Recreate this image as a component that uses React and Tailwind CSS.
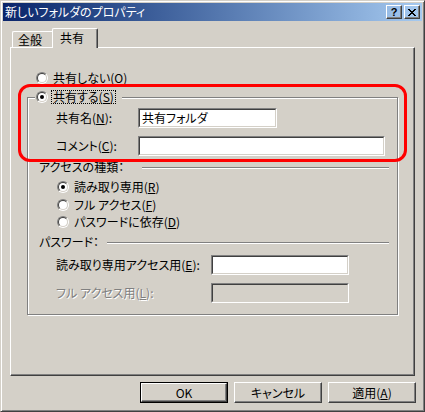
import React from 'react'

const raised =
  'border border-t-white border-l-white border-b-[#404040] border-r-[#404040] shadow-[inset_-1px_-1px_0_#808080]'

function Key({ children }) {
  return <span className="underline underline-offset-[1px]">{children}</span>
}

function Radio({ checked }) {
  return (
    <span className="flex h-[12px] w-[12px] shrink-0 rounded-full border border-t-[#808080] border-l-[#808080] border-b-white border-r-white">
      <span className="flex h-[10px] w-[10px] items-center justify-center rounded-full border border-t-[#404040] border-l-[#404040] border-b-[#d4d0c8] border-r-[#d4d0c8] bg-white">
        {checked && <span className="h-[4px] w-[4px] rounded-full bg-black" />}
      </span>
    </span>
  )
}

function Field({ className, value, disabled }) {
  return (
    <div
      className={`h-[20px] border border-t-[#808080] border-l-[#808080] border-b-white border-r-white ${className}`}
    >
      <div
        className={`flex h-full items-center border border-t-[#404040] border-l-[#404040] border-b-[#d4d0c8] border-r-[#d4d0c8] px-[2px] ${
          disabled ? 'bg-[#d4d0c8]' : 'bg-white'
        }`}
      >
        {value}
      </div>
    </div>
  )
}

function Button({ children, isDefault }) {
  if (isDefault) {
    return (
      <div className="h-[21px] w-[88px] border border-black">
        <div className={`flex h-full items-center justify-center ${raised}`}>{children}</div>
      </div>
    )
  }
  return <div className={`flex h-[21px] w-[88px] items-center justify-center ${raised}`}>{children}</div>
}

function Heading({ label, width }) {
  return (
    <div className="flex h-[13px] items-center pl-[11px] pr-[8px]">
      <span className={width}>{label}</span>
      <span className="mt-[3px] h-[2px] flex-1 border-t border-b border-t-[#808080] border-b-white" />
    </div>
  )
}

function Option({ checked, children, className }) {
  return (
    <div className={`flex h-[13px] items-center gap-[5px] pl-[29px] ${className}`}>
      <Radio checked={checked} />
      <span>{children}</span>
    </div>
  )
}

export default function App() {
  return (
    <div className="h-[412px] w-[425px] bg-[#d4d0c8] p-[2px] text-[12px] leading-none text-black font-['Noto_Sans_CJK_JP',sans-serif] [font-feature-settings:'palt'] border border-t-[#d4d0c8] border-l-[#d4d0c8] border-b-[#404040] border-r-[#404040] shadow-[inset_1px_1px_0_#fff,inset_-1px_-1px_0_#808080]">
      {/* title bar */}
      <div className="flex h-[18px] items-center justify-between bg-gradient-to-r from-[#0a246a] to-[#a6caf0] pl-[2px] pr-[2px]">
        <span className="text-white">新しいフォルダのプロパティ</span>
        <div className="flex gap-[2px]">
          <div className={`flex h-[14px] w-[16px] items-center justify-center ${raised}`}>
            <span className="font-['Liberation_Sans',sans-serif] text-[11px] font-bold leading-none">?</span>
          </div>
          <div className={`flex h-[14px] w-[16px] items-center justify-center ${raised}`}>
            <svg width="8" height="7" viewBox="0 0 8 7" shapeRendering="crispEdges">
              <path
                d="M0 0h2v1H0zM6 0h2v1H6zM1 1h2v1H1zM5 1h2v1H5zM2 2h4v1H2zM3 3h2v1H3zM2 4h4v1H2zM1 5h2v1H1zM5 5h2v1H5zM0 6h2v1H0zM6 6h2v1H6z"
                fill="#000"
              />
            </svg>
          </div>
        </div>
      </div>

      {/* tabs */}
      <div className="flex h-[26px] items-end pl-[9px]">
        <div className="flex h-[16px] w-[42px] items-center rounded-t-[2px] border-t border-l border-white pl-[5px]">
          全般
        </div>
        <div className="relative z-10 -mb-px -ml-[2px] flex h-[20px] w-[46px] items-start rounded-t-[2px] border-t border-l border-r border-t-white border-l-white border-r-[#404040] bg-[#d4d0c8] pl-[7px] pt-[3px] shadow-[inset_-1px_0_0_#808080]">
          共有
        </div>
      </div>

      {/* panel */}
      <div className="relative mx-[7px] h-[329px] border border-t-white border-l-white border-b-[#404040] border-r-[#404040] pl-[16px] pt-[23px] shadow-[inset_-1px_-1px_0_#808080]">
        <div className="ml-[9px] flex h-[13px] items-center gap-[5px]">
          <Radio />
          <span>
            共有しない(<Key>O</Key>)
          </span>
        </div>

        <div className="mt-[13px] h-[218px] w-[371px] border border-[#808080] shadow-[1px_1px_0_#fff,inset_1px_1px_0_#fff]">
          <div className="-mt-[8px] ml-[7px] flex h-[14px] w-fit items-center gap-[3px] bg-[#d4d0c8] pl-[1px] pr-[6px]">
            <Radio checked />
            <span className="flex h-[14px] items-center border border-dotted border-black px-[1px]">
              共有する(<Key>S</Key>)
            </span>
          </div>

          <div className="mt-[4px] flex h-[20px] items-center pl-[28px]">
            <span className="w-[82px]">
              共有名(<Key>N</Key>):
            </span>
            <Field className="w-[139px]" value="共有フォルダ" />
          </div>
          <div className="mt-[8px] flex h-[20px] items-center pl-[28px]">
            <span className="w-[82px]">
              コメント(<Key>C</Key>):
            </span>
            <Field className="w-[247px]" />
          </div>

          <div className="mt-[4px]">
            <Heading label="アクセスの種類：" width="w-[103px]" />
          </div>
          <Option checked className="mt-[7px]">
            読み取り専用(<Key>R</Key>)
          </Option>
          <Option className="mt-[5px]">
            フル アクセス(<Key>F</Key>)
          </Option>
          <Option className="mt-[4px]">
            パスワードに依存(<Key>D</Key>)
          </Option>

          <div className="mt-[7px]">
            <Heading label="パスワード：" width="w-[68px]" />
          </div>
          <div className="mt-[7px] flex h-[20px] items-center pl-[28px]">
            <span className="w-[155px]">
              読み取り専用アクセス用(<Key>E</Key>):
            </span>
            <Field className="w-[138px]" />
          </div>
          <div className="mt-[8px] flex h-[20px] items-center pl-[28px]">
            <span className="w-[155px] text-[#808080] [text-shadow:1px_1px_0_#fff]">
              フル アクセス用(<Key>L</Key>):
            </span>
            <Field className="w-[138px]" disabled />
          </div>
        </div>

        {/* annotation */}
        <div className="pointer-events-none absolute left-[7px] top-[36px] h-[78px] w-[389px] rounded-[12px] border-[3px] border-[#ff0000]" />
      </div>

      {/* buttons */}
      <div className="mt-[6px] flex justify-end gap-[6px] pr-[6px]">
        <Button isDefault>OK</Button>
        <Button>キャンセル</Button>
        <Button>
          適用(<Key>A</Key>)
        </Button>
      </div>
    </div>
  )
}
